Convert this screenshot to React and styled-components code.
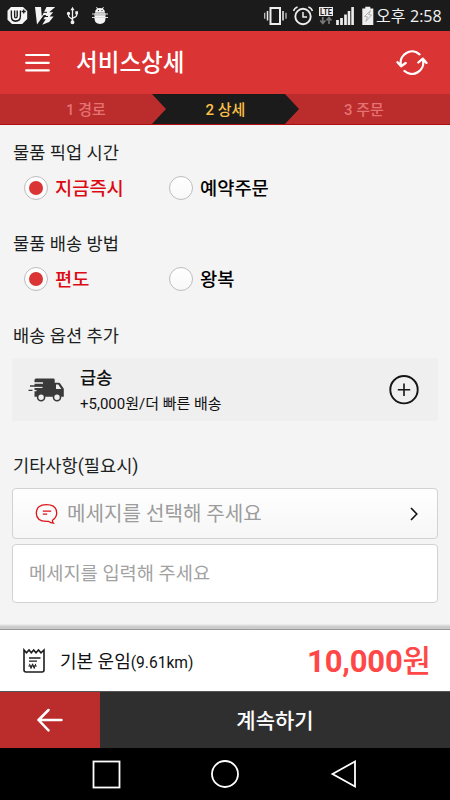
import React, { useState } from 'react'
import styled, { createGlobalStyle } from 'styled-components'

const RED = '#da3434'
const DARK_RED = '#bb2c2c'
const TEXT_RED = '#dc0a12'
const BLACK = '#1b1b1b'

const GlobalStyle = createGlobalStyle`
    * {
        box-sizing: border-box;
    }
    body {
        margin: 0;
        background: #f4f4f4;
        font-family: Roboto, 'Noto Sans CJK KR', sans-serif;
    }
    button, input {
        font-family: inherit;
    }
    svg {
        display: block;
        flex-shrink: 0;
    }
`

const Container = styled.div`
    display: flex;
    flex-direction: column;
    width: 450px;
    height: 800px;
    overflow: hidden;
    background: #f4f4f4;
`

const StatusBar = styled.div`
    display: flex;
    justify-content: space-between;
    height: 31px;
    background: ${BLACK};
`

const Clock = styled.div`
    display: flex;
    align-items: center;
    height: 31px;
    padding-right: 8px;
    color: #f2f2f2;
    white-space: nowrap;
`

const ClockText = styled.span`
    width: ${props => props.$width};
    padding-top: ${props => props.$top || 0};
    font-family: ${props => props.$family};
    font-size: ${props => props.$size};
    line-height: 29px;
`

const Header = styled.div`
    display: flex;
    align-items: center;
    height: 63px;
    padding: 0 22px 0 25px;
    background: ${RED};
`

const Title = styled.div`
    flex: 1;
    padding: 2px 0 0 26px;
    font-size: 23.6px;
    font-weight: 500;
    line-height: 61px;
    color: white;
`

const Steps = styled.div`
    display: flex;
    height: 31px;
    background: ${DARK_RED};
    border-bottom: 1px solid #b00e0e;
`

const Step = styled.div`
    width: ${props => props.$width};
    padding: ${props => props.$pad || '1px 0 0'};
    font-size: 15px;
    font-weight: 500;
    line-height: 30px;
    text-align: center;
    color: #e57373;
`

const ActiveStep = styled(Step)`
    color: #fbc04a;
    background: ${BLACK};
    clip-path: polygon(0 0, 133px 0, 100% 50%, 133px 100%, 0 100%, 14px 50%);
`

const Content = styled.div`
    display: flex;
    flex-direction: column;
    height: 499px;
    padding: 15px 12px 0;
`

const Label = styled.div`
    height: 24px;
    margin-bottom: ${props => props.$gap};
    padding-left: 1px;
    font-size: 17.6px;
    line-height: 26px;
    color: #1c1f22;
`

const RadioRow = styled.div`
    display: flex;
    height: 24px;
    margin-bottom: ${props => props.$gap};
    padding-left: 12px;
`

const RadioLabel = styled.div`
    display: flex;
    align-items: center;
    width: 145px;
    gap: 7px;
    font-size: 18.7px;
    font-weight: 500;
    line-height: 24px;
    cursor: pointer;
    color: ${props => props.$on ? TEXT_RED : '#000'};
`

const RadioText = styled.span`
    padding-top: 1px;
`

const Circle = styled.span`
    display: flex;
    align-items: center;
    justify-content: center;
    width: 24px;
    height: 24px;
    border: 1px solid #bdbdbd;
    border-radius: 50%;
    background: linear-gradient(#fff, #f8f8f8);
`

const Dot = styled.span`
    width: 14px;
    height: 14px;
    border-radius: 50%;
    background: ${RED};
`

const OptionCard = styled.div`
    display: flex;
    align-items: center;
    height: 63px;
    margin: 0 0 32px;
    padding: 0 19px 0 16px;
    border-radius: 3px;
    background: #efefef;
`

const OptionText = styled.div`
    flex: 1;
    padding: 2px 0 0 15px;
    color: #111;
`

const OptionName = styled.div`
    font-size: 17.6px;
    font-weight: 500;
    line-height: 26px;
`

const OptionDesc = styled.div`
    font-size: 15px;
    line-height: 26px;
`

const MessageSelect = styled.div`
    display: flex;
    align-items: center;
    height: 51px;
    margin-bottom: 5px;
    padding: 0 18px 0 22px;
    border: 1px solid #d2d2d4;
    border-radius: 4px;
    background: linear-gradient(#fff, #f6f6f6);
`

const SelectText = styled.div`
    flex: 1;
    padding: 0 0 2px 8px;
    font-size: 20.1px;
    color: #9c9c9c;
`

const MessageInput = styled.input`
    width: 100%;
    height: 59px;
    padding: 1px 16px 0;
    border: 1px solid #d2d2d6;
    border-radius: 4px;
    outline: none;
    background: #fff;
    font-size: 18.7px;
    &::placeholder {
        color: #a2a2a2;
        opacity: 1;
    }
`

const Shadow = styled.div`
    height: 6px;
    background: linear-gradient(#f0f0f0, #cbcbcb 45%, #cbcbcb 83%, #999 84%);
`

const PriceBar = styled.div`
    display: flex;
    align-items: center;
    height: 61px;
    padding: 0 19px 0 22px;
    background: #fff;
`

const PriceLabel = styled.div`
    flex: 1;
    padding: 0 0 1px 14px;
    font-size: 18px;
    color: #111;
`

const Distance = styled.span`
    font-size: 15.6px;
`

const Price = styled.div`
    padding-top: 2px;
    font-size: 31px;
    font-weight: 500;
    line-height: 59px;
    color: #ff4747;
`

const Amount = styled.span`
    font-size: 31px;
    font-weight: 700;
    letter-spacing: -0.2px;
`

const BottomButtons = styled.div`
    display: flex;
    height: 57px;
    border-top: 1px solid #555;
    background: #2f2f2f;
`

const BackButton = styled.button`
    display: flex;
    align-items: center;
    justify-content: center;
    width: 100px;
    padding: 0 0 1px;
    border: 0;
    background: ${DARK_RED};
`

const NextButton = styled.button`
    flex: 1;
    padding: 0 0 2px;
    border: 0;
    background: #2f2f2f;
    color: #fff;
    font-size: 21px;
    font-weight: 500;
`

const NavBar = styled.div`
    display: flex;
    justify-content: center;
    align-items: center;
    gap: 90px;
    height: 52px;
    background: #000;
`

const NoticeIcons = () => (
    <svg width="115" height="31" viewBox="0 0 115 31" fill="none">
        {/* U+ */}
        <path d="M11 7h12l4.2 4v8l-5 5H12l-4.5-4.2v-9z" fill="#f4f4f4" />
        <path d="M13 10.5v5.5q0 3.6 2.5 3.6 3.3 0 3.3-3.6v-5.5" stroke={BLACK} strokeWidth="4.6" />
        <path d="M13 9v7q0 3.4 2.5 3.4 3.3 0 3.3-3.4V9" stroke="#fff" strokeWidth="1.8" />
        <path d="M23.7 9.5v4M21.7 11.5h4" stroke={BLACK} strokeWidth="1.3" />
        {/* V3 */}
        <path d="M35 7h6l.8 9.5L46.5 7h8.7l-6 5.2h4l-3.6 4.3h4l-4.4 5.5-7 2.8 3.6-5.6h-2.5l3-4.2h-2.5L37 24.5z" fill="#f4f4f4" />
        <path d="M47 12.3h-3.5M48 16.5h-3" stroke={BLACK} />
        {/* usb */}
        <g stroke="#eee" strokeWidth="1.3">
            <path d="M72.5 9v14M68.5 13.5v2.2q0 1 1 1.5l3 2.3M76.7 12.5v2.5q0 1-1 1.6l-3.2 1.8" />
            <circle cx="72.5" cy="22.3" r="1.3" fill="#eee" />
            <circle cx="68.5" cy="13.5" r="1" fill="#eee" />
        </g>
        <path d="M72.5 6.8l2 3.4h-4zM75.3 11.2h2.7v3h-2.7z" fill="#eee" />
        {/* debug bug */}
        <path d="M95 12.7q0-3 2-4l-1-1.3.5-.5 1.4 1.4q2-.7 4 0l1.5-1.4.5.5-1 1.3q2.1 1 2.1 4z" fill="#f4f4f4" />
        <path d="M94.5 13.3h11v5q0 5.7-5.5 5.7t-5.5-5.7z" fill="#f4f4f4" />
        <path d="M92 14h16M92 17.5h16" stroke="#ddd" strokeWidth="1.1" />
        <path d="M94.5 15h11" stroke="#999" strokeWidth=".7" />
        <path d="M98 10.6h1M101.5 10.6h1" stroke={BLACK} />
    </svg>
)

const SystemIcons = () => (
    <svg width="114" height="31" viewBox="262 0 114 31" fill="none">
        {/* vibrate */}
        <rect x="270.5" y="8" width="9.5" height="16" stroke="#eee" strokeWidth="2" />
        <path d="M267.5 11v9.5M283 11v9.5" stroke="#eee" strokeWidth="1.5" />
        <path d="M264.7 12.7v6M286 12.7v6" stroke="#ccc" strokeWidth="1.2" />
        {/* alarm */}
        <circle cx="303" cy="16.5" r="7.7" stroke="#eee" strokeWidth="1.9" />
        <path d="M303 12v5h4M293.6 11q.8-3 4-4M312.4 11q-.8-3-4-4" stroke="#eee" strokeWidth="1.5" />
        {/* lte */}
        <rect x="319" y="7" width="14" height="9" fill="#eee" />
        <text x="320" y="14.6" fontFamily="Roboto, sans-serif" fontSize="8.4" fontWeight="700" textLength="12" lengthAdjust="spacingAndGlyphs" fill={BLACK}>LTE</text>
        <path d="M322.8 17v6M320.3 20.5l2.5 3 2.5-3M329 24v-6M326.5 20.5l2.5-3 2.5 3" stroke="#777" strokeWidth="1.7" />
        {/* signal */}
        <path d="M337.5 25v-5M341.5 25v-7M345.5 25v-10.5" stroke="#eee" strokeWidth="2.7" />
        <path d="M349 25V11M352.6 25V7" stroke="#eee" strokeWidth="2.6" />
        {/* battery */}
        <path d="M362.3 8.5h3V6.8h5v1.7h3V25h-11z" fill="#eee" />
        <path d="M370.5 10.5l-6 6 3 .3-1.7 4.7 5.8-6.5-3-.5z" stroke="#aaa" strokeWidth=".9" />
    </svg>
)

const MenuIcon = () => (
    <svg width="25" height="20" viewBox="0 0 25 20" stroke="#fff" strokeWidth="2.2" strokeLinecap="round">
        <path d="M1.2 2h22.6M1.2 9.8h22.6M1.2 17.4h22.6" />
    </svg>
)

const RefreshIcon = () => (
    <svg width="32" height="28" viewBox="0 0 32 28" fill="none" stroke="#fff" strokeWidth="2.3" strokeLinecap="round" strokeLinejoin="round">
        <path d="M23.5 5.3A11.3 11.3 0 0 0 4.9 16M1.5 13.2l3.6 4 4.6-3.2" />
        <path d="M8.5 22A11.3 11.3 0 0 0 27.1 11.5M22.3 13.5l4.5-3.9 3.7 4.3" />
    </svg>
)

const TruckIcon = () => (
    <svg width="37" height="24" viewBox="0 0 37 24">
        <path d="M8 .5h17.5q1.2 0 1.2 1.2v3h4.1q.8 0 1.4.9l3.6 5.2v8H6.5V2q0-1.5 1.5-1.5z" fill="#3a3a3a" />
        <path d="M28 6.5h2.3l3 4.5H28z" fill="#efefef" />
        <path d="M5.5 5h9.5M5.5 9.3h9M5.5 12.6h3" stroke="#efefef" strokeWidth="1.4" />
        <path d="M2 8h13M.5 12.4h4" stroke="#3a3a3a" strokeWidth="1.4" />
        <circle cx="13.1" cy="19.3" r="3.5" fill="#efefef" stroke="#3a3a3a" strokeWidth="1.6" />
        <circle cx="29" cy="19.3" r="3.5" fill="#efefef" stroke="#3a3a3a" strokeWidth="1.6" />
    </svg>
)

const PlusIcon = () => (
    <svg width="30" height="30" viewBox="0 0 30 30" fill="none" stroke="#151515">
        <circle cx="15" cy="14.7" r="13.7" strokeWidth="1.9" />
        <path d="M15 8.5v12.4M8.8 14.7h12.4" strokeWidth="1.6" />
    </svg>
)

const TalkIcon = () => (
    <svg width="24" height="22" viewBox="0 0 24 22" fill="none" stroke="#dc1519" strokeWidth="1.3">
        <path d="M17.5 17.2Q21.7 14.6 21.7 10c0-5.3-3.7-8.4-10.2-8.4S1.3 4.7 1.3 10s3.7 8.3 10.2 8.3h1.8q2.3 1.8 5.1 1.8-1.2-1.2-.9-2.9z" />
        <path d="M7.8 8.2h8.4M7.8 11.2h4.4" />
    </svg>
)

const ChevronIcon = () => (
    <svg width="10" height="14" viewBox="0 0 10 14" fill="none" stroke="#111" strokeWidth="1.6">
        <path d="M2 1l5.8 6L2 13" />
    </svg>
)

const ReceiptIcon = () => (
    <svg width="24" height="26" viewBox="0 0 24 26" fill="none" stroke="#1c1c1c">
        <path d="M2 2v20q0 2 2 2h16q2 0 2-2V2l-3 2.8L16.5 2 14 4.8 11.7 2 9.3 4.8 7 2 4.5 4.8z" strokeWidth="1.6" />
        <path d="M7 10h11.5M7 13.2h8" strokeWidth="1.3" />
        <path d="M7.5 15.8l1.5 4.7 1.6-4.7 1.6 4.7 1.5-4.7M6.4 18h8.4" strokeWidth="1" />
    </svg>
)

const BackIcon = () => (
    <svg width="28" height="24" viewBox="0 0 28 24" fill="none" stroke="#fff" strokeWidth="2.5" strokeLinecap="round" strokeLinejoin="round">
        <path d="M25.5 12H2.5M12.5 2L2.5 12l10 10.3" />
    </svg>
)

const NavIcon = ({ children }) => (
    <svg width="29" height="29" viewBox="0 0 29 29" fill="none" stroke="#fff" strokeWidth="1.8">
        {children}
    </svg>
)

const RadioGroup = ({ options, gap }) => {
    const [selected, setSelected] = useState(options[0])

    return (
        <RadioRow $gap={gap}>
            {options.map(option => (
                <RadioLabel
                    key={option}
                    $on={option === selected}
                    onClick={() => setSelected(option)}
                >
                    <Circle>{option === selected && <Dot />}</Circle>
                    <RadioText>{option}</RadioText>
                </RadioLabel>
            ))}
        </RadioRow>
    )
}

export default () => {
    return (
        <Container>
            <GlobalStyle />
            <StatusBar>
                <NoticeIcons />
                <Clock>
                    <SystemIcons />
                    <ClockText $width="34px" $family="'Noto Sans CJK KR', sans-serif" $size="16px">오후</ClockText>
                    <ClockText $width="32px" $top="2px" $family="'Open Sans', sans-serif" $size="16px">2:58</ClockText>
                </Clock>
            </StatusBar>

            <Header>
                <MenuIcon />
                <Title>서비스상세</Title>
                <RefreshIcon />
            </Header>

            <Steps>
                <Step $width="152px" $pad="1px 0 0 20px">1 경로</Step>
                <ActiveStep $width="147px">2 상세</ActiveStep>
                <Step $width="151px" $pad="1px 21px 0 0">3 주문</Step>
            </Steps>

            <Content>
                <Label $gap="12px">물품 픽업 시간</Label>
                <RadioGroup options={['지금즉시', '예약주문']} gap="31px" />

                <Label $gap="12px">물품 배송 방법</Label>
                <RadioGroup options={['편도', '왕복']} gap="32px" />

                <Label $gap="11px">배송 옵션 추가</Label>
                <OptionCard>
                    <TruckIcon />
                    <OptionText>
                        <OptionName>급송</OptionName>
                        <OptionDesc>+5,000원/더 빠른 배송</OptionDesc>
                    </OptionText>
                    <PlusIcon />
                </OptionCard>

                <Label $gap="11px">기타사항(필요시)</Label>
                <MessageSelect>
                    <TalkIcon />
                    <SelectText>메세지를 선택해 주세요</SelectText>
                    <ChevronIcon />
                </MessageSelect>
                <MessageInput placeholder="메세지를 입력해 주세요" />
            </Content>

            <Shadow />
            <PriceBar>
                <ReceiptIcon />
                <PriceLabel>기본 운임<Distance>(9.61km)</Distance></PriceLabel>
                <Price><Amount>10,000</Amount>원</Price>
            </PriceBar>

            <BottomButtons>
                <BackButton><BackIcon /></BackButton>
                <NextButton>계속하기</NextButton>
            </BottomButtons>

            <NavBar>
                <NavIcon><rect x="1.5" y="1.5" width="26" height="26" /></NavIcon>
                <NavIcon><circle cx="14" cy="14" r="13" /></NavIcon>
                <NavIcon><path d="M2.5 14L25 1.5v25z" /></NavIcon>
            </NavBar>
        </Container>
    )
}
